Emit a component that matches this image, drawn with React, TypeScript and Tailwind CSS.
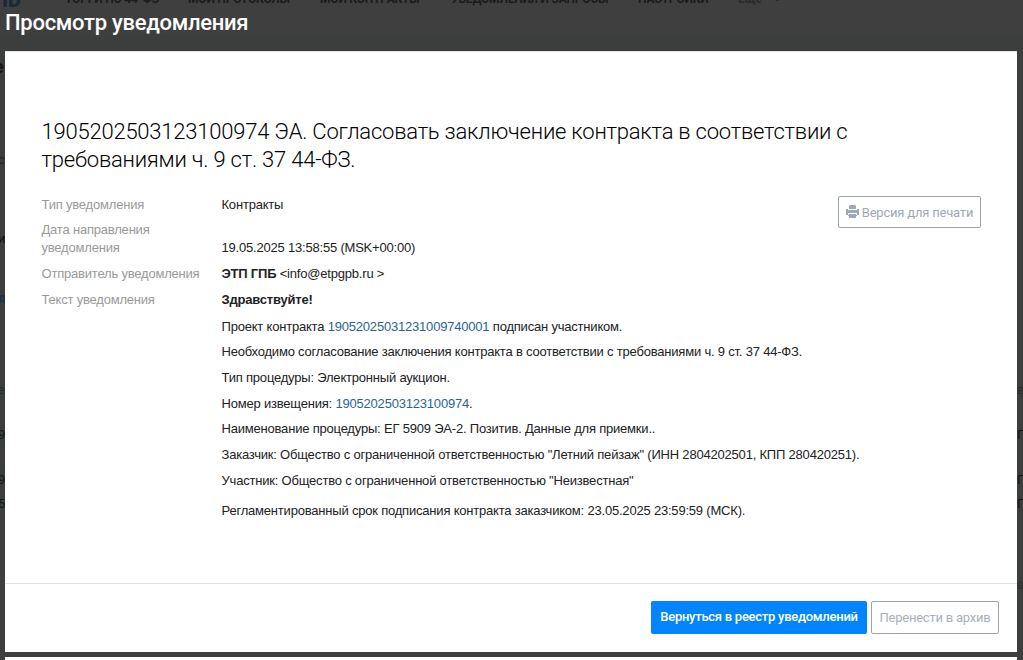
import React from 'react';

interface Fragment {
  text: string;
  className: string;
}

// Pieces of the registry page that stay visible around the dialog
const navItems: Fragment[] = [
  { text: 'ТОРГИ ПО 44-ФЗ', className: 'left-[65px] text-[#1b1b1b]' },
  { text: 'МОИ ПРОТОКОЛЫ', className: 'left-[188px] text-[#1b1b1b]' },
  { text: 'МОИ КОНТРАКТЫ', className: 'left-[320px] text-[#1b1b1b]' },
  { text: 'УВЕДОМЛЕНИЯ И ЗАПРОСЫ', className: 'left-[451px] text-[#1b1b1b]' },
  { text: 'НАСТРОЙКИ', className: 'left-[638px] text-[#1b1b1b]' },
];

const leftFragments: Fragment[] = [
  { text: 'с', className: 'top-[151px] text-[#222]' },
  { text: 'и', className: 'top-[230px] text-[#111]' },
  { text: 'д', className: 'top-[289px] text-[#1c3247] font-bold' },
  { text: 'е', className: 'top-[381px] text-[#292c2f]' },
  { text: '9', className: 'top-[426px] text-[#15181d]' },
  { text: '9', className: 'top-[471px] text-[#15181d]' },
  { text: '5', className: 'top-[495px] text-[#15181d]' },
];

const rightFragments: Fragment[] = [
  { text: 'в', className: 'top-[381px] text-[#2a2d2e]' },
  { text: 'Г', className: 'top-[426px] text-[#111]' },
  { text: 'Г', className: 'top-[471px] text-[#111]' },
  { text: 'Г', className: 'top-[495px] text-[#111]' },
  { text: 'а', className: 'top-[576px] text-[#2a2d2e]' },
];

const Backdrop: React.FC = () => (
  <div className="absolute inset-0 overflow-hidden bg-[#3c3e3d]" aria-hidden="true">
    <div className="h-[33px] bg-[#3f3f3f]" />
    <div className="absolute top-[-11px] left-[2px] text-[20px] leading-[22px] font-black text-[#1c2a38]">ID</div>
    {navItems.map(item => (
      <span key={item.text} className={`absolute top-[-8px] text-[12px] leading-[14px] font-bold tracking-[-0.2px] whitespace-nowrap ${item.className}`}>
        {item.text}
      </span>
    ))}
    <span className="absolute top-[-8px] left-[738px] text-[12px] leading-[14px] font-bold text-[#2a2a2a]">Еще</span>
    <div className="absolute top-0 left-[776px] h-px w-[3px] bg-[#2a2a2a]" />
    <span className="absolute top-[57px] left-[-6px] text-[18px] leading-[20px] font-bold text-[#151515]">е.</span>
    {leftFragments.map((item, i) => (
      <span key={i} className={`absolute left-[-2px] text-[13px] leading-[18px] ${item.className}`}>{item.text}</span>
    ))}
    {rightFragments.map((item, i) => (
      <span key={i} className={`absolute left-[1017px] text-[13px] leading-[18px] ${item.className}`}>{item.text}</span>
    ))}
    <div className="absolute bottom-0 left-0 h-[8px] w-full bg-[#3f3f3f]" />
  </div>
);

const PrinterIcon: React.FC = () => (
  <svg className="mb-[2px] shrink-0" width="13" height="13" viewBox="0 0 13 13" fill="currentColor" aria-hidden="true">
    <path d="M4 0h5l1 1v3H3V1z" />
    <path d="M0 4h2v1h9V4h2v6h-2V8H2v2H0z" />
    <path d="M3 9h7v1h1v1h-1v2H3v-2H2v-1h1z" />
  </svg>
);

const Row: React.FC<{ label: string; className: string; children: React.ReactNode }> = ({ label, className, children }) => (
  <div className={`flex items-end leading-[18px] ${className}`}>
    <div className="w-[180px] shrink-0 pr-5 text-[#999]">{label}</div>
    <div className="whitespace-nowrap">{children}</div>
  </div>
);

const App: React.FC = () => {
  return (
    <div className="relative h-[660px] w-[1023px] overflow-hidden font-['Roboto','Liberation_Sans',sans-serif]">
      <Backdrop />
      <div className="relative flex h-full flex-col pr-[6px] pl-[5px]">
        <h1 className="h-[51px] shrink-0 pt-[10px] text-[22px] leading-[26px] font-medium tracking-[-0.28px] text-white">Просмотр уведомления</h1>

        <div className="flex h-[601px] shrink-0 flex-col border-t border-[#dfe4e3] bg-white">
          <div className="h-[532px] shrink-0 border-b border-[#e1e1e1] pr-[36px] pl-[36.5px] pt-[66px]">
            <h2 className="w-[860px] text-[22px] leading-[28px] font-light tracking-[-0.22px] text-black">
              1905202503123100974 ЭА. Согласовать заключение контракта в соответствии с
              <br />
              требованиями ч. 9 ст. 37 44-ФЗ.
            </h2>

            <div className="mt-[22px] flex items-start font-['Liberation_Sans',Arial,sans-serif] text-[13px] tracking-[-0.2px] text-[#222]">
              <div className="min-w-0 flex-1">
                <Row label="Тип уведомления" className="h-[18px]">Контракты</Row>
                <Row label="Дата направления уведомления" className="mt-[7px]">19.05.2025 13:58:55 (MSK+00:00)</Row>
                <Row label="Отправитель уведомления" className="mt-[8px] h-[18px]">
                  <b>ЭТП ГПБ</b> &lt;info@etpgpb.ru &gt;
                </Row>
                <Row label="Текст уведомления" className="mt-[8px] h-[18px]"><b>Здравствуйте!</b></Row>
                <div className="ml-[180px] flex flex-col leading-[18px] whitespace-nowrap">
                  <p className="mt-[9px]">Проект контракта <a className="text-[#2a6496]">19052025031231009740001</a> подписан участником.</p>
                  <p className="mt-[7px]">Необходимо согласование заключения контракта в соответствии с требованиями ч. 9 ст. 37 44-ФЗ.</p>
                  <p className="mt-[8px]">Тип процедуры: Электронный аукцион.</p>
                  <p className="mt-[8px]">Номер извещения: <a className="text-[#2a6496]">1905202503123100974</a>.</p>
                  <p className="mt-[7px]">Наименование процедуры: ЕГ 5909 ЭА-2. Позитив. Данные для приемки..</p>
                  <p className="mt-[8px]">Заказчик: Общество с ограниченной ответственностью "Летний пейзаж" (ИНН 2804202501, КПП 280420251).</p>
                  <p className="mt-[8px]">Участник: Общество с ограниченной ответственностью "Неизвестная"</p>
                  <p className="mt-[12px]">Регламентированный срок подписания контракта заказчиком: 23.05.2025 23:59:59 (МСК).</p>
                </div>
              </div>
              <button className="flex h-[32px] w-[143px] shrink-0 items-center justify-center gap-[3px] rounded-[2px] border border-[#9aa4b1] font-['Roboto',sans-serif] text-[13px] whitespace-nowrap text-[#9fa9b5]">
                <PrinterIcon />
                <span className="pt-px">Версия для печати</span>
              </button>
            </div>
          </div>

          <div className="flex flex-1 items-start justify-end gap-1 pt-[17px] pr-[18px] text-[13px] tracking-[-0.22px]">
            <button className="h-[33px] w-[216px] rounded-[2px] bg-[#0085ff] pb-px font-medium tracking-[-0.26px] whitespace-nowrap text-white">Вернуться в реестр уведомлений</button>
            <button className="h-[33px] w-[128px] rounded-[2px] border border-[#9aa4b1] whitespace-nowrap text-[#a9b0b9]">Перенести в архив</button>
          </div>
        </div>

        <div className="mt-[5px] flex-1 bg-white" />
      </div>
    </div>
  );
};

export default App;
